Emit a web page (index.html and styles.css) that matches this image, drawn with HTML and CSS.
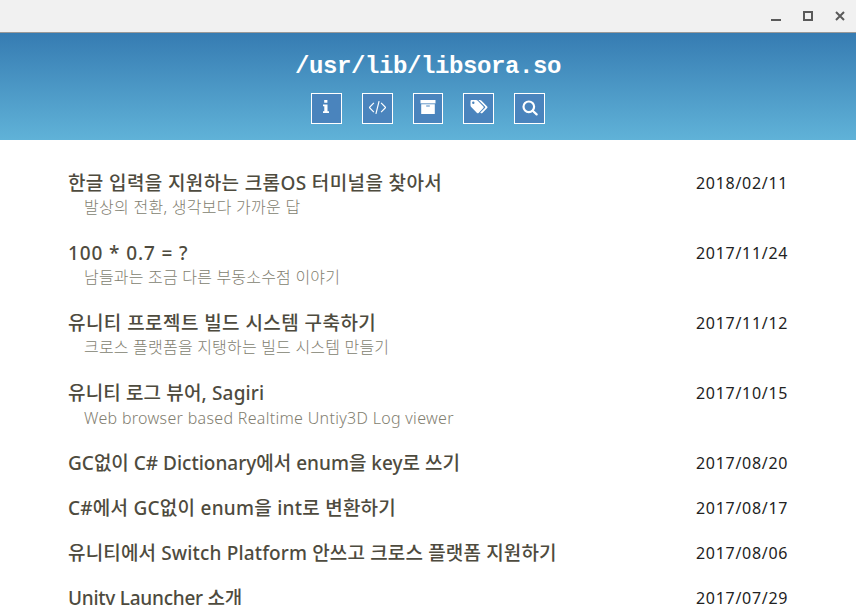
FILE: index.html
```html
<!DOCTYPE html>
<html lang="ko">
<head>
<meta charset="utf-8">
<title>/usr/lib/libsora.so</title>
<link rel="stylesheet" href="styles.css">
</head>
<body>
<div class="titlebar">
  <svg class="win" viewBox="0 0 10 10"><path d="M0 8h10v2H0z"/></svg>
  <svg class="win" viewBox="0 0 10 10"><path fill-rule="evenodd" d="M0 0h10v10H0zM2 2v6h6V2z"/></svg>
  <svg class="win" viewBox="0 0 10 10"><path d="M1 1l8 8M9 1L1 9" fill="none" stroke="#5a5a5a" stroke-width="2"/></svg>
</div>
<header class="header">
  <h1 class="site">/usr/lib/libsora.so</h1>
  <nav class="nav">
    <a class="btn"><svg class="icon info" viewBox="0 0 16 16"><path d="M6.2 1h3.2v2.8H6.2zM5 5.6h4.5v6.7H11V14H5v-1.7h1.3V7.3H5z"/></svg></a>
    <a class="btn"><svg class="icon line" viewBox="0 0 16 16"><path d="M4.6 3.6L.3 8l4.3 4.4M11.4 3.6L15.7 8l-4.3 4.4M9.5 2L6.5 14"/></svg></a>
    <a class="btn"><svg class="icon archive" viewBox="0 0 16 16"><path d="M.5 1h15v3.4H.5z"/><path fill-rule="evenodd" d="M1.2 5.2h13.6V15H1.2zM6.2 6.4v1h3.6v-1z"/></svg></a>
    <a class="btn"><svg class="icon tags" viewBox="0 0 18 16"><path fill-rule="evenodd" d="M.5 2.2Q.5 1 1.7 1h4.4q.8 0 1.4.6l5.9 5.9q.7.8 0 1.6l-4.8 4.8q-.8.7-1.6 0L1.2 8.1Q.5 7.5.5 6.6zM3.3 2.6a1.2 1.2 0 1 0 0 2.4 1.2 1.2 0 0 0 0-2.4z"/><path d="M8.4 1h1.4q.9 0 1.5.6l5.9 5.9q.7.8 0 1.6l-4.8 4.8q-.9.8-1.7 0l-.4-.4 4.6-4.5q.9-.8 0-1.6z"/></svg></a>
    <a class="btn"><svg class="icon search" viewBox="0 0 16 16"><circle cx="6.8" cy="6.8" r="5.3"/><path d="M10.7 10.7l3.9 3.7"/></svg></a>
  </nav>
</header>
<main class="posts">
  <article class="post"><div><h2 class="title t1">한글 입력을 지원하는 크롬OS 터미널을 찾아서</h2><p class="sub s1">발상의 전환, 생각보다 가까운 답</p></div><time class="date">2018/02/11</time></article>
  <article class="post"><div><h2 class="title t2">100 * 0.7 = ?</h2><p class="sub s2">남들과는 조금 다른 부동소수점 이야기</p></div><time class="date">2017/11/24</time></article>
  <article class="post"><div><h2 class="title t3">유니티 프로젝트 빌드 시스템 구축하기</h2><p class="sub s2">크로스 플랫폼을 지탱하는 빌드 시스템 만들기</p></div><time class="date">2017/11/12</time></article>
  <article class="post"><div><h2 class="title t4">유니티 로그 뷰어, Sagiri</h2><p class="sub s4">Web browser based Realtime Untiy3D Log viewer</p></div><time class="date">2017/10/15</time></article>
  <article class="post"><h2 class="title t5">GC없이 C# Dictionary에서 enum을 key로 쓰기</h2><time class="date">2017/08/20</time></article>
  <article class="post"><h2 class="title t6">C#에서 GC없이 enum을 int로 변환하기</h2><time class="date">2017/08/17</time></article>
  <article class="post"><h2 class="title t7">유니티에서 Switch Platform 안쓰고 크로스 플랫폼 지원하기</h2><time class="date">2017/08/06</time></article>
  <article class="post"><h2 class="title t8">Unity Launcher 소개</h2><time class="date">2017/07/29</time></article>
</main>
</body>
</html>
```
FILE: styles.css
```css
* { box-sizing: border-box; }
body {
  margin: 0;
  height: 605px;
  overflow: hidden;
  background: #fff;
  font-family: "Noto Sans", "Noto Sans CJK KR", sans-serif;
}
h1, h2, p { margin: 0; }
.titlebar {
  height: 33px;
  background: #f1f1f1;
  border-bottom: 1px solid #999;
  display: flex;
  justify-content: flex-end;
  align-items: center;
  gap: 22px;
  padding-right: 11px;
}
.win { width: 10px; height: 10px; fill: #5a5a5a; }
.header {
  height: 107px;
  background: linear-gradient(#367cb2, #60b2d8);
  display: flex;
  flex-direction: column;
  align-items: center;
  padding-top: 20px;
}
.site {
  font: bold 24px/28px "Liberation Mono", monospace;
  letter-spacing: -0.4px;
  color: #fff;
}
.nav { display: flex; gap: 20px; margin-top: 12px; }
.btn {
  width: 30.75px;
  height: 31px;
  border: 1px solid #fff;
  background: #4a84bd;
  display: flex;
  justify-content: center;
  padding-top: 6px;
}
.icon { width: 16px; height: 16px; fill: #fff; }
.info { margin-top: -1px; margin-right: 1px; }
.archive { margin-top: -1px; }
.tags { width: 18px; margin-top: -1px; }
.line { width: 17px; height: 17px; margin-top: -1px; fill: none; stroke: #fff; stroke-width: 1.1; }
.search { fill: none; stroke: #fff; stroke-width: 2.2; stroke-linecap: round; }
.posts { padding: 31px 68px 0; }
.post {
  display: flex;
  justify-content: space-between;
  align-items: flex-start;
  margin-bottom: 20px;
}
.title {
  font-size: 19px;
  line-height: 25px;
  height: 25px;
  font-weight: 500;
  color: #4e4b3e;
  white-space: nowrap;
}
.t1 { letter-spacing: 0.38px; }
.t2 { letter-spacing: 0.88px; }
.t3 { letter-spacing: 0.44px; }
.t4 { letter-spacing: 0.15px; }
.t6 { letter-spacing: 0.25px; }
.t7 { letter-spacing: 0.15px; }
.t8 { letter-spacing: -0.25px; }
.sub {
  margin-left: 16px;
  font-size: 16px;
  line-height: 23px;
  height: 25px;
  font-weight: 300;
  color: #827e70;
  white-space: nowrap;
}
.s1 { letter-spacing: 0.27px; }
.s2 { letter-spacing: 0.2px; }
.s4 { letter-spacing: 0.31px; line-height: 25px; }
.date { width: 92px; font-size: 16px; line-height: 25px; height: 25px; font-weight: 400; letter-spacing: 0.7px; color: #222; white-space: nowrap; }
```
